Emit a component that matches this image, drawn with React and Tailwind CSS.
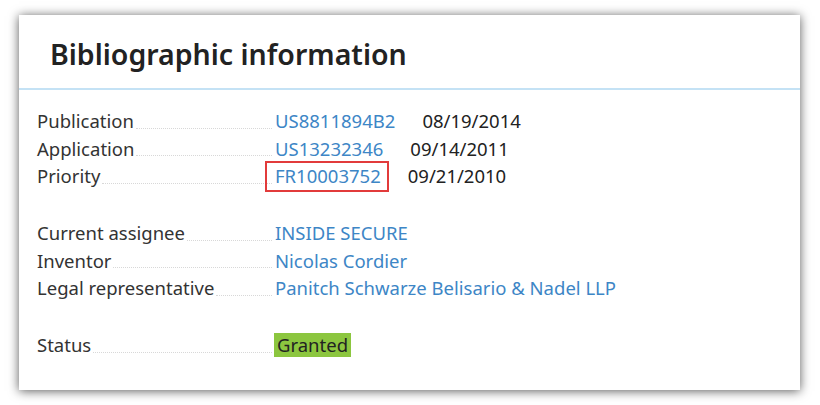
import React from "react";

const groups = [
  [
    { label: "Publication", value: "US8811894B2", date: "08/19/2014" },
    { label: "Application", value: "US13232346", date: "09/14/2011" },
    { label: "Priority", value: "FR10003752", date: "09/21/2010", marked: true },
  ],
  [
    { label: "Current assignee", value: "INSIDE SECURE" },
    { label: "Inventor", value: "Nicolas Cordier" },
    { label: "Legal representative", value: "Panitch Schwarze Belisario & Nadel LLP" },
  ],
  [{ label: "Status", value: "Granted", status: true }],
];

function Row({ row }) {
  return (
    <div className="flex items-center h-[27.5px] leading-[27.5px]">
      <div className="flex w-[235px] shrink-0 items-end h-full">
        <span className="text-[#333]">{row.label}</span>
        <span className="flex-1 mb-[6px] ml-[2px] border-b border-dotted border-[#d8d8d8]" />
      </div>
      <div className="pl-[3px] flex items-center">
        {row.status ? (
          <span className="bg-[#8cc63f] text-[#222] px-[3px] leading-[24px] -ml-[1px]">{row.value}</span>
        ) : (
          <span className="relative text-[#3d86c6]">
            {row.value}
            {row.marked && (
              <span className="absolute -left-[10px] -right-[8px] -top-[1px] -bottom-[2px] border-2 border-[#e23b3b]" />
            )}
          </span>
        )}
        {row.date && <span className="ml-[27px] text-[#222]">{row.date}</span>}
      </div>
    </div>
  );
}

export default function App() {
  return (
    <div className="w-[820px] h-[405px] bg-white pt-[15px] pl-[19px] font-['Noto_Sans',sans-serif]">
      <div className="w-[781px] h-[375px] bg-white shadow-[0_1px_10px_rgba(0,0,0,0.65)]">
        <div className="h-[75px] border-b-2 border-[#c4e2f5] pl-[31px] pt-[22px]">
          <h1 className="text-[28.5px] leading-[34px] font-semibold text-[#222]">Bibliographic information</h1>
        </div>
        <div className="pl-[18px] pt-[17px] text-[18.5px] flex flex-col gap-[29.5px]">
          {groups.map((g, i) => (
            <div key={i} className="flex flex-col">
              {g.map((r) => (
                <Row key={r.label} row={r} />
              ))}
            </div>
          ))}
        </div>
      </div>
    </div>
  );
}
